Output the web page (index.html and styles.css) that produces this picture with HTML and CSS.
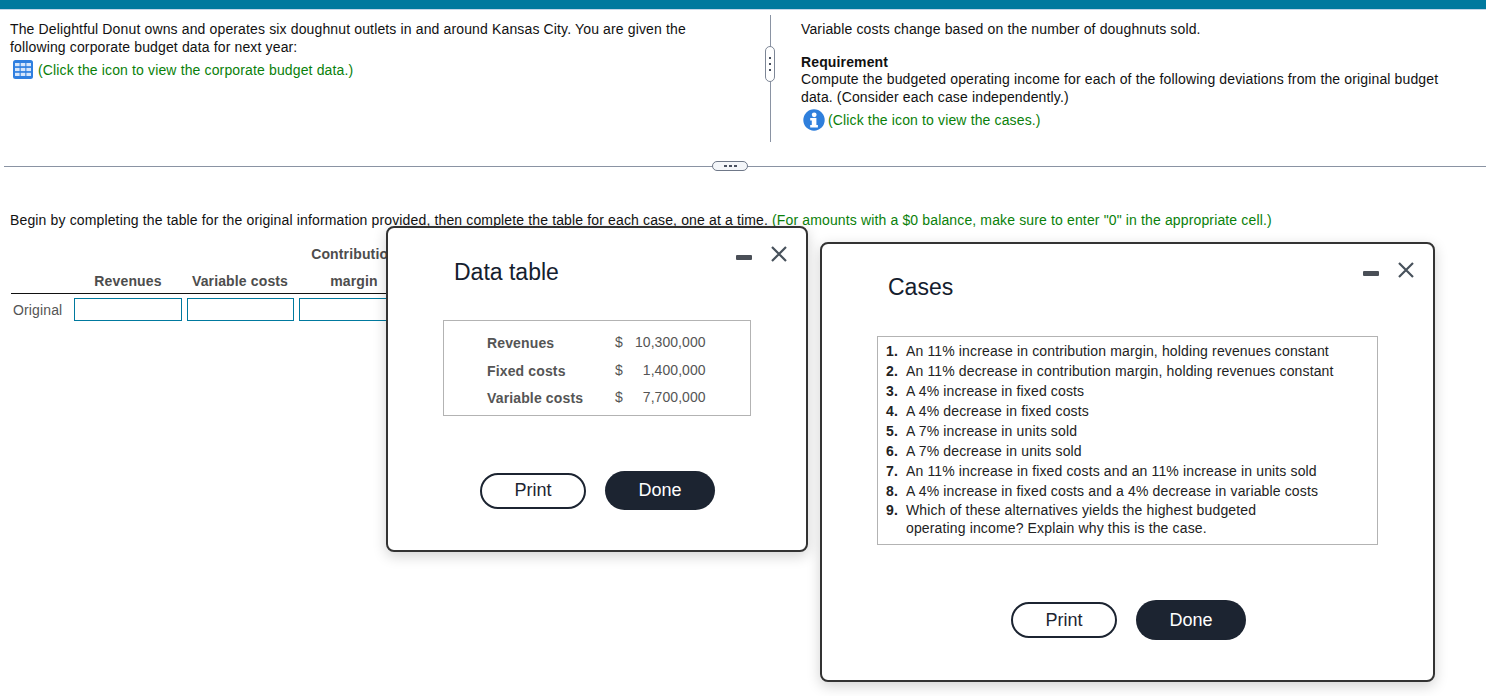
FILE: index.html
```html
<!DOCTYPE html>
<html lang="en">
<head>
<meta charset="utf-8">
<title>Delightful Donut</title>
<link rel="stylesheet" href="styles.css">
</head>
<body>
<div class="topbar"></div>
<section class="split">
  <div class="pane pane-left">
    <p class="para">The Delightful Donut owns and operates six doughnut outlets in and around Kansas City. You are given the following corporate budget data for next year:</p>
    <p class="link-row link-row-table">
      <svg class="icon-table" width="20" height="19" viewBox="0 0 20 19"><rect width="20" height="19" rx="2.5" fill="#2f7fe0"/><g fill="#d6e6fb"><rect x="2" y="3" width="4.6" height="3.2"/><rect x="7.7" y="3" width="4.6" height="3.2"/><rect x="13.4" y="3" width="4.6" height="3.2"/><rect x="2" y="7.9" width="4.6" height="3.2"/><rect x="7.7" y="7.9" width="4.6" height="3.2"/><rect x="13.4" y="7.9" width="4.6" height="3.2"/><rect x="2" y="12.8" width="4.6" height="3.2"/><rect x="7.7" y="12.8" width="4.6" height="3.2"/><rect x="13.4" y="12.8" width="4.6" height="3.2"/></g></svg>
      <span class="green">(Click the icon to view the corporate budget data.)</span>
    </p>
  </div>
  <div class="vdivider"><span class="vhandle"><i></i><i></i><i></i></span></div>
  <div class="pane pane-right">
    <p class="para">Variable costs change based on the number of doughnuts sold.</p>
    <p class="para para-req"><strong class="req-head">Requirement</strong>Compute the budgeted operating income for each of the following deviations from the original budget data. (Consider each case independently.)</p>
    <p class="link-row link-row-info">
      <svg class="icon-info" width="22" height="22" viewBox="0 0 22 22"><circle cx="11" cy="11" r="10.7" fill="#2f7fdc"/><circle cx="11.2" cy="5.8" r="2.4" fill="#fff"/><path d="M7.2 9h6.2v7h1.5v2.6H7.2V16h1.6v-4.4H7.2z" fill="#fff"/></svg>
      <span class="green">(Click the icon to view the cases.)</span>
    </p>
  </div>
</section>
<div class="hdivider"><span class="hhandle"><i></i><i></i><i></i></span></div>
<p class="instruction">Begin by completing the table for the original information provided, then complete the table for each case, one at a time. <span class="green">(For amounts with a $0 balance, make sure to enter "0" in the appropriate cell.)</span></p>
<table class="work">
  <thead>
    <tr><th class="c-label"></th><th class="c-rev"></th><th class="c-var"></th><th class="c-con">Contribution</th></tr>
    <tr class="head-rule"><th></th><th class="h-rev">Revenues</th><th>Variable costs</th><th>margin</th></tr>
  </thead>
  <tbody>
    <tr><td class="row-label">Original</td><td><span class="cell-input"></span></td><td><span class="cell-input"></span></td><td><span class="cell-input"></span></td></tr>
  </tbody>
</table>

<div class="dialog dialog-data">
  <div class="win-controls"><span class="minimize"></span><svg class="close" width="16" height="16" viewBox="0 0 16 16"><path d="M1 1l14 14M15 1L1 15" stroke="#48525c" stroke-width="2.2" fill="none"/></svg></div>
  <h2 class="dialog-title">Data table</h2>
  <div class="box box-data">
    <table class="data">
      <tr><th>Revenues</th><td class="cur">$</td><td class="amt">10,300,000</td></tr>
      <tr><th>Fixed costs</th><td class="cur">$</td><td class="amt">1,400,000</td></tr>
      <tr><th>Variable costs</th><td class="cur">$</td><td class="amt">7,700,000</td></tr>
    </table>
  </div>
  <div class="actions"><span class="btn btn-print">Print</span><span class="btn btn-done">Done</span></div>
</div>

<div class="dialog dialog-cases">
  <div class="win-controls"><span class="minimize"></span><svg class="close" width="16" height="16" viewBox="0 0 16 16"><path d="M1 1l14 14M15 1L1 15" stroke="#48525c" stroke-width="2.2" fill="none"/></svg></div>
  <h2 class="dialog-title">Cases</h2>
  <div class="box box-cases">
    <div class="case"><b>1.</b><span>An 11% increase in contribution margin, holding revenues constant</span></div>
    <div class="case"><b>2.</b><span>An 11% decrease in contribution margin, holding revenues constant</span></div>
    <div class="case"><b>3.</b><span>A 4% increase in fixed costs</span></div>
    <div class="case"><b>4.</b><span>A 4% decrease in fixed costs</span></div>
    <div class="case"><b>5.</b><span>A 7% increase in units sold</span></div>
    <div class="case"><b>6.</b><span>A 7% decrease in units sold</span></div>
    <div class="case"><b>7.</b><span>An 11% increase in fixed costs and an 11% increase in units sold</span></div>
    <div class="case"><b>8.</b><span>A 4% increase in fixed costs and a 4% decrease in variable costs</span></div>
    <div class="case case-last"><b>9.</b><span>Which of these alternatives yields the highest budgeted<br>operating income? Explain why this is the case.</span></div>
  </div>
  <div class="actions"><span class="btn btn-print">Print</span><span class="btn btn-done">Done</span></div>
</div>
</body>
</html>
```
FILE: styles.css
```css
* { box-sizing: border-box; }
html, body { margin: 0; padding: 0; }
body {
  position: relative;
  width: 1486px;
  height: 696px;
  overflow: hidden;
  background: #fff;
  color: #111;
  font-family: "Liberation Sans", Arial, sans-serif;
  font-size: 14px;
  line-height: 18px;
  letter-spacing: 0.14px;
}
p { margin: 0; }
.green { color: #0a7f0a; }
.topbar { height: 10px; background: #00799e; border-bottom: 1px solid #c4d6e8; }
.split { display: flex; height: 156px; }
.pane { padding-top: 10px; }
.pane-left { width: 760px; padding-left: 10px; padding-right: 60px; }
.vdivider { position: relative; width: 1px; height: 127px; margin-top: 5px; margin-left: 10px; background: #8a93a3; }
.vhandle {
  position: absolute; left: -5px; top: 31px;
  width: 10px; height: 36px;
  display: flex; flex-direction: column; align-items: center; justify-content: center; gap: 4px;
  background: #fff; border: 1px solid #7d8696; border-radius: 5px;
}
.vhandle i { display: block; width: 2px; height: 2px; background: #4a5160; }
.hhandle i { display: block; width: 3px; height: 2px; background: #4a5160; }
.pane-right { width: 690px; padding-left: 30px; }
.para-req { margin-top: 16px; }
.req-head { display: block; line-height: 16px; }
.link-row { display: flex; align-items: center; color: #0a7f0a; }
.link-row-table { margin-top: 4px; padding-left: 3px; gap: 5px; }
.link-row-info { margin-top: 3px; padding-left: 2px; gap: 3px; }
.hdivider { position: relative; height: 1px; margin-left: 4px; background: #8a93a3; }
.hhandle {
  position: absolute; left: 708px; top: -5px;
  width: 36px; height: 10px;
  display: flex; align-items: center; justify-content: center; gap: 2px;
  background: #f4f6f9; border: 1px solid #6f7888; border-radius: 5px;
}
.instruction { margin: 44px 0 0 10px; white-space: nowrap; }
.work { border-collapse: collapse; margin: 13px 0 0 11px; }
.work th { font-weight: bold; color: #4d4d4d; padding: 0; text-align: center; height: 26px; vertical-align: middle; }
.work thead tr:first-child th { height: 24px; }
.work .head-rule th { border-bottom: 1px solid #111; height: 27px; padding-top: 4px; }
.work .head-rule .h-rev { padding-left: 1px; }
.c-label { width: 60px; }
.c-rev { width: 113px; }
.c-var { width: 112px; }
.c-con { width: 116px; }
.work td { padding: 4px 2.5px 0; }
.work .row-label { color: #555; text-align: left; padding: 7px 0 0 2px; vertical-align: top; }
.cell-input { display: block; height: 23px; border: 1px solid #00799e; background: #fff; }
.dialog {
  position: absolute;
  background: #fff;
  border: 2px solid #333;
  border-radius: 8px;
  box-shadow: 0 4px 14px rgba(0,0,0,.18);
}
.dialog-data { left: 386px; top: 226px; width: 422px; height: 326px; }
.dialog-cases { left: 820px; top: 242px; width: 615px; height: 440px; }
.win-controls { position: absolute; top: 18px; right: 19px; display: flex; align-items: center; gap: 19px; }
.minimize { display: block; width: 16px; height: 5px; margin-top: 7px; border-radius: 1px; background: #4a4f57; }
.close { display: block; }
.dialog-title { margin: 0; font-size: 23px; line-height: 28px; font-weight: normal; color: #14202e; letter-spacing: 0; }
.dialog-data .dialog-title { padding: 30px 0 0 66px; }
.dialog-cases .dialog-title { padding: 29px 0 0 66px; }
.box { border: 1px solid #b3b3b3; }
.box-data { margin: 34px 0 0 55px; width: 308px; height: 96px; padding: 9px 0 0 43px; }
.data { border-collapse: collapse; }
.data th { width: 128px; padding: 4px 0 0; font-weight: bold; color: #555; text-align: left; height: 27.5px; vertical-align: top; }
.data td { padding: 3px 0 0; color: #555; height: 27.5px; vertical-align: top; }
.cur { width: 20px; }
.data .amt { width: 67px; text-align: right; letter-spacing: 0.05px; }
.box-cases { margin: 35px 0 0 55px; width: 501px; height: 209px; padding: 4px 0 0 8px; color: #222; }
.case { display: flex; height: 20px; line-height: 20px; }
.case b { width: 20px; flex: none; }
.case-last { height: 36px; line-height: 18px; }
.actions { display: flex; align-items: center; }
.dialog-data .actions { margin: 55px 0 0 92px; gap: 19px; }
.dialog-cases .actions { margin: 55px 0 0 189px; gap: 19px; }
.btn { display: flex; align-items: center; justify-content: center; font-size: 18px; border-radius: 20px; letter-spacing: 0; }
.dialog-data .btn { padding-bottom: 2px; }
.btn-print { width: 106px; height: 36px; border: 2px solid #1c2431; color: #1c2431; background: #fff; }
.btn-done { width: 110px; height: 39px; background: #1c2431; color: #fff; }
.dialog-cases .btn-done { height: 40px; }
```
